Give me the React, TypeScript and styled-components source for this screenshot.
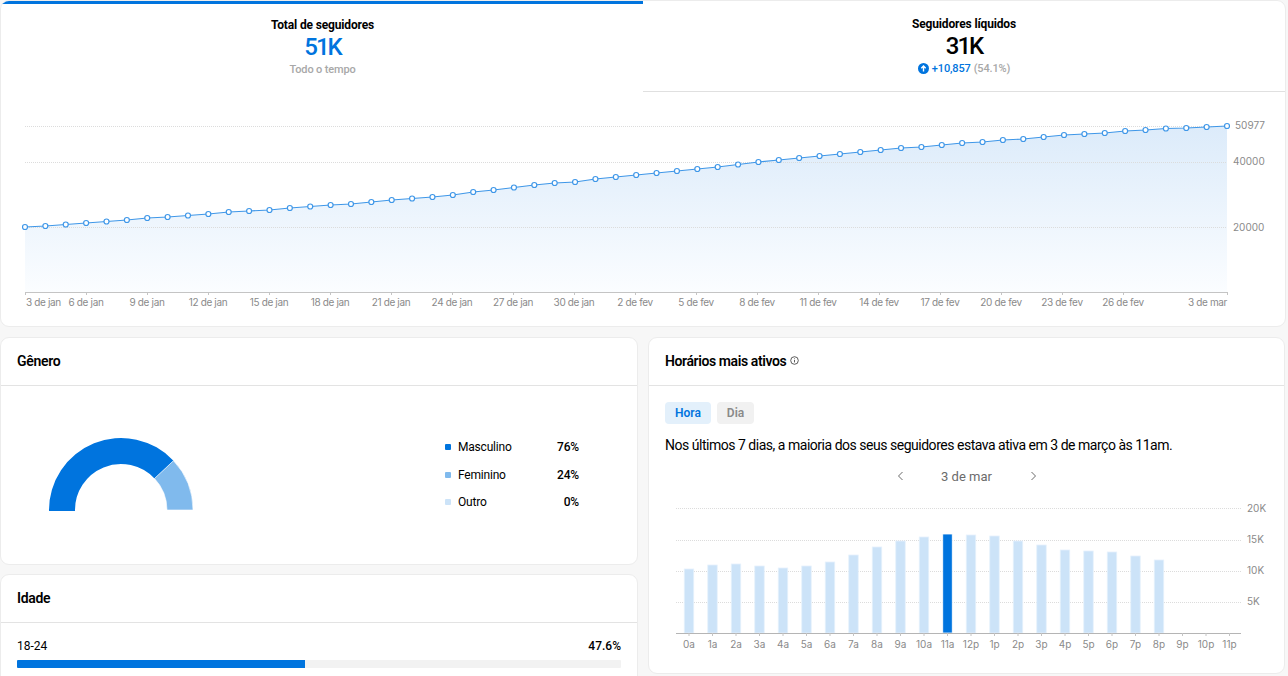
import React from 'react';
import styled, { createGlobalStyle } from 'styled-components';

const GlobalStyle = createGlobalStyle`
  html, body {
    margin: 0;
    height: 676px;
    overflow: hidden;
    background: #f7f7f7;
    font-family: Roboto, "Liberation Sans", sans-serif;
    color: #000;
  }
`;

const BLUE = '#0074de';
const MID = '#80baed';
const LIGHT = '#cce3f8';
const GRID = '#dcdcdc';
const AXIS_TEXT = '#8a8a8a';

const Page = styled.div`
  width: 1286px;
  display: flex;
  flex-direction: column;
  gap: 10px;
`;

const Card = styled.section`
  background: #fff;
  border: 1px solid #ececec;
  border-radius: 9px;
  overflow: hidden;
`;

const OverviewCard = styled(Card)`
  height: 327px;
  box-sizing: border-box;
`;

const Tabs = styled.div`
  display: grid;
  grid-template-columns: 642px 1fr;
  height: 91px;
`;

const Tab = styled.div<{ $active?: boolean }>`
  display: flex;
  flex-direction: column;
  align-items: center;
  box-sizing: border-box;
  padding-top: ${(p) => (p.$active ? '14px' : '16px')};
  padding-left: ${(p) => (p.$active ? '1px' : '0')};
  border-top: ${(p) => (p.$active ? `3px solid ${BLUE}` : 'none')};
  border-bottom: ${(p) => (p.$active ? 'none' : '1px solid #e0e0e0')};
`;

const TabTitle = styled.div`
  font-size: 12px;
  font-weight: 700;
  line-height: 15px;
  letter-spacing: -0.15px;
`;

const BigNumber = styled.div<{ $blue?: boolean }>`
  font-size: 24px;
  font-weight: 500;
  line-height: 29px;
  letter-spacing: -2px;
  color: ${(p) => (p.$blue ? BLUE : '#000')};
`;

const TabNote = styled.div`
  display: flex;
  align-items: center;
  gap: 3px;
  font-size: 11px;
  font-weight: 500;
  line-height: 15px;
  letter-spacing: -0.15px;
  color: #a8a8a8;
`;

const Delta = styled.span`
  color: ${BLUE};
`;

const LowerGrid = styled.div`
  display: grid;
  grid-template-columns: 638px 637px;
  gap: 10px;
  align-items: start;
`;

const Column = styled.div`
  display: flex;
  flex-direction: column;
  gap: 9px;
`;

const CardHeader = styled.header`
  height: 45px;
  display: flex;
  align-items: center;
  gap: 4px;
  padding: 0 15px 2px 16px;
  border-bottom: 1px solid #e3e3e3;
  font-size: 14px;
  font-weight: 600;
  letter-spacing: -0.3px;
`;

const ActiveHeader = styled(CardHeader)`
  letter-spacing: -0.4px;
`;

const GenderBody = styled.div`
  height: 178px;
  display: flex;
  align-items: center;
  justify-content: space-between;
  padding: 0 58px 0 47px;
`;

const GaugeBox = styled.div`
  display: flex;
  margin-bottom: 2px;
`;

const Legend = styled.ul`
  list-style: none;
  margin: 0 0 1px;
  padding: 0;
  width: 134px;
  display: flex;
  flex-direction: column;
  gap: 13.5px;
`;

const LegendRow = styled.li`
  display: flex;
  align-items: center;
  font-size: 12px;
  line-height: 14px;
  letter-spacing: -0.2px;
`;

const Swatch = styled.i<{ $color: string }>`
  width: 6px;
  height: 6px;
  border-radius: 1px;
  margin-right: 7px;
  background: ${(p) => p.$color};
`;

const LegendValue = styled.b`
  margin-left: auto;
  font-weight: 500;
`;

const AgeBody = styled.div`
  padding: 16px 16px 40px;
`;

const AgeRow = styled.div`
  display: flex;
  justify-content: space-between;
  font-size: 12px;
  line-height: 14px;
  margin-bottom: 7px;
`;

const AgeValue = styled.b`
  font-weight: 500;
`;

const Track = styled.div`
  height: 8px;
  background: #f2f2f2;
  border-radius: 1px;
  overflow: hidden;
`;

const Fill = styled.div`
  height: 100%;
  background: ${BLUE};
`;

const ActiveCard = styled(Card)`
  height: 337px;
  box-sizing: border-box;
`;

const ActiveBody = styled.div`
  padding: 16px 0 0 15px;
`;

const Pills = styled.div`
  display: flex;
  gap: 6px;
  margin-left: 1px;
`;

const Pill = styled.button<{ $active?: boolean }>`
  height: 22px;
  padding: 0 10px;
  border: 0;
  border-radius: 4px;
  font: 600 12px Roboto, sans-serif;
  color: ${(p) => (p.$active ? BLUE : '#8a8a8a')};
  background: ${(p) => (p.$active ? '#e3f0fb' : '#f1f1f1')};
`;

const Summary = styled.p`
  margin: 12px 0 0 1px;
  font-size: 14px;
  line-height: 18px;
  letter-spacing: -0.48px;
`;

const DateNav = styled.div`
  display: flex;
  align-items: center;
  justify-content: center;
  gap: 30px;
  height: 20px;
  margin: 12px 0 0;
  padding-right: 15px;
  font-size: 13px;
  color: #6b6b6b;
`;

const DateLabel = styled.span`
  width: 66px;
  text-align: center;
`;

const ChartSvg = styled.svg<{ $gap?: number }>`
  display: block;
  margin-top: ${(p) => p.$gap ?? 0}px;
`;

const AxisText = styled.text<{ $tight?: boolean }>`
  font-family: Inter, sans-serif;
  font-size: 10px;
  letter-spacing: ${(p) => (p.$tight ? '-0.35px' : '0')};
  fill: ${AXIS_TEXT};
`;

const follows = [
  227, 226, 224.5, 223, 221.5, 220, 218, 217, 215.5, 214, 212, 211, 210, 208, 206.5, 205, 204, 202,
  200, 198.5, 197, 195, 192, 190, 187.5, 185, 183, 182, 179, 177, 175, 173, 171, 169, 167, 164.5, 162,
  160, 158, 156, 154, 152, 150, 148, 147, 145, 143, 142, 140, 139, 137, 135, 134, 133, 131, 130,
  128.5, 128, 127, 126,
];
const pointX = (i: number) => 25 + (i * 1202) / (follows.length - 1);

const dateTicks: [string, number, 'start' | 'middle' | 'end'][] = [
  ['3 de jan', 26, 'start'],
  ['6 de jan', 86, 'middle'],
  ['9 de jan', 147, 'middle'],
  ['12 de jan', 208, 'middle'],
  ['15 de jan', 269, 'middle'],
  ['18 de jan', 330, 'middle'],
  ['21 de jan', 391, 'middle'],
  ['24 de jan', 452, 'middle'],
  ['27 de jan', 513, 'middle'],
  ['30 de jan', 574, 'middle'],
  ['2 de fev', 635, 'middle'],
  ['5 de fev', 696, 'middle'],
  ['8 de fev', 757, 'middle'],
  ['11 de fev', 818, 'middle'],
  ['14 de fev', 879, 'middle'],
  ['17 de fev', 940, 'middle'],
  ['20 de fev', 1001, 'middle'],
  ['23 de fev', 1062, 'middle'],
  ['26 de fev', 1123, 'middle'],
  ['3 de mar', 1227, 'end'],
];

const FollowersChart = () => {
  const line = follows.map((y, i) => `${pointX(i)},${y}`).join(' ');
  return (
    <ChartSvg width="1284" height="233" viewBox="1 92 1284 233">
      <defs>
        <linearGradient id="area" x1="0" y1="126" x2="0" y2="292" gradientUnits="userSpaceOnUse">
          <stop offset="0" stopColor="#dcebfa" />
          <stop offset="1" stopColor="#fbfdff" />
        </linearGradient>
      </defs>
      <polygon points={`25,292 ${line} 1227,292`} fill="url(#area)" />
      {[126, 162, 227].map((y) => (
        <line key={y} x1="25" x2="1227" y1={y + 0.5} y2={y + 0.5} stroke={GRID} strokeDasharray="1 1" />
      ))}
      <line x1="25" x2="1227" y1="292.5" y2="292.5" stroke="#c4c4c4" />
      {dateTicks.map(([label, x]) => (
        <line key={label} x1={label === '3 de jan' ? 25.5 : x + 0.5} x2={label === '3 de jan' ? 25.5 : x + 0.5} y1="292" y2="295" stroke="#c4c4c4" />
      ))}
      <polyline points={line} fill="none" stroke="#3f97e8" strokeWidth="1.2" />
      {follows.map((y, i) => (
        <circle key={i} cx={pointX(i)} cy={y} r="2.5" fill="#fff" stroke="#3f97e8" strokeWidth="1.2" />
      ))}
      {dateTicks.map(([label, x, anchor]) => (
        <AxisText key={label} $tight x={x} y="306" textAnchor={anchor}>
          {label}
        </AxisText>
      ))}
      <AxisText x="1235" y="129">50977</AxisText>
      <AxisText x="1233" y="165">40000</AxisText>
      <AxisText x="1233" y="231">20000</AxisText>
    </ChartSvg>
  );
};

const GenderGauge = () => (
  <svg width="146" height="75" viewBox="48 437 146 75">
    <path d="M49 511 A72 72 0 0 1 173.5 460.7 L154.5 478.5 A46 46 0 0 0 75 511 Z" fill={BLUE} />
    <path d="M173.5 460.7 A72 72 0 0 1 193 510 L167 510 A46 46 0 0 0 154.5 478.5 Z" fill={MID} stroke="#fff" strokeWidth="0.6" />
  </svg>
);

const hours = ['0a', '1a', '2a', '3a', '4a', '5a', '6a', '7a', '8a', '9a', '10a', '11a', '12p', '1p', '2p', '3p', '4p', '5p', '6p', '7p', '8p', '9p', '10p', '11p'];
const barTops = [569, 565, 564, 566, 568, 566, 562, 555, 547, 541, 537, 534, 535, 536, 541, 545, 550, 551, 552, 556, 560];
const hourX = (i: number) => 689 + i * 23.5;

const HoursChart = () => (
  <ChartSvg $gap={12} width="621" height="170" viewBox="649 498 621 170">
    {[508, 540, 571, 602].map((y) => (
      <line key={y} x1="676" x2="1241" y1={y + 0.5} y2={y + 0.5} stroke="#dcdcdc" strokeDasharray="1 1" />
    ))}
    {barTops.map((top, i) => (
      <rect
        key={i}
        x={hourX(i) - 4.75}
        y={top}
        width="9.5"
        height={633 - top}
        fill={i === 11 ? BLUE : LIGHT}
        stroke={i === 11 ? '#fff' : '#e6f1fc'}
        strokeWidth="0.8"
      />
    ))}
    <line x1="676" x2="1241" y1="633.5" y2="633.5" stroke="#b5b5b5" />
    {hours.map((h, i) => (
      <line key={h} x1={hourX(i)} x2={hourX(i)} y1="633" y2="636" stroke="#c4c4c4" />
    ))}
    {hours.map((h, i) => (
      <AxisText key={h} x={hourX(i)} y="648" textAnchor="middle">
        {h}
      </AxisText>
    ))}
    <AxisText x="1247" y="512">20K</AxisText>
    <AxisText x="1247" y="543">15K</AxisText>
    <AxisText x="1247" y="574">10K</AxisText>
    <AxisText x="1247" y="605">5K</AxisText>
  </ChartSvg>
);

const InfoIcon = () => (
  <svg width="9" height="9" viewBox="0 0 9 9" fill="none" stroke="#333" strokeWidth="0.8">
    <circle cx="4.5" cy="4.5" r="3.8" />
    <path d="M4.5 4v2.4M4.5 2.4v.8" />
  </svg>
);

const UpIcon = () => (
  <svg width="11" height="11" viewBox="0 0 11 11">
    <circle cx="5.5" cy="5.5" r="5.5" fill={BLUE} />
    <path d="M5.5 8.5V3M3.3 5.2l2.2-2.2 2.2 2.2" fill="none" stroke="#fff" strokeWidth="1.4" />
  </svg>
);

const Chevron = ({ left }: { left?: boolean }) => (
  <svg width="7" height="10" viewBox="0 0 7 10" fill="none" stroke="#6b6b6b" strokeWidth="1">
    <path d={left ? 'M5.5 1 1.5 5l4 4' : 'M1.5 1l4 4-4 4'} />
  </svg>
);

const genders = [
  { label: 'Masculino', value: '76%', color: BLUE },
  { label: 'Feminino', value: '24%', color: MID },
  { label: 'Outro', value: '0%', color: LIGHT },
];

export default function App() {
  return (
    <>
      <GlobalStyle />
      <Page>
        <OverviewCard>
          <Tabs>
            <Tab $active>
              <TabTitle>Total de seguidores</TabTitle>
              <BigNumber $blue>51K</BigNumber>
              <TabNote>Todo o tempo</TabNote>
            </Tab>
            <Tab>
              <TabTitle>Seguidores líquidos</TabTitle>
              <BigNumber>31K</BigNumber>
              <TabNote>
                <UpIcon />
                <Delta>+10,857</Delta> (54.1%)
              </TabNote>
            </Tab>
          </Tabs>
          <FollowersChart />
        </OverviewCard>
        <LowerGrid>
          <Column>
            <Card>
              <CardHeader>Gênero</CardHeader>
              <GenderBody>
                <GaugeBox>
                  <GenderGauge />
                </GaugeBox>
                <Legend>
                  {genders.map((g) => (
                    <LegendRow key={g.label}>
                      <Swatch $color={g.color} />
                      {g.label}
                      <LegendValue>{g.value}</LegendValue>
                    </LegendRow>
                  ))}
                </Legend>
              </GenderBody>
            </Card>
            <Card>
              <CardHeader>Idade</CardHeader>
              <AgeBody>
                <AgeRow>
                  18-24
                  <AgeValue>47.6%</AgeValue>
                </AgeRow>
                <Track>
                  <Fill style={{ width: '47.6%' }} />
                </Track>
              </AgeBody>
            </Card>
          </Column>
          <ActiveCard>
            <ActiveHeader>
              Horários mais ativos <InfoIcon />
            </ActiveHeader>
            <ActiveBody>
              <Pills>
                <Pill $active>Hora</Pill>
                <Pill>Dia</Pill>
              </Pills>
              <Summary>Nos últimos 7 dias, a maioria dos seus seguidores estava ativa em 3 de março às 11am.</Summary>
              <DateNav>
                <Chevron left />
                <DateLabel>3 de mar</DateLabel>
                <Chevron />
              </DateNav>
            </ActiveBody>
            <HoursChart />
          </ActiveCard>
        </LowerGrid>
      </Page>
    </>
  );
}
